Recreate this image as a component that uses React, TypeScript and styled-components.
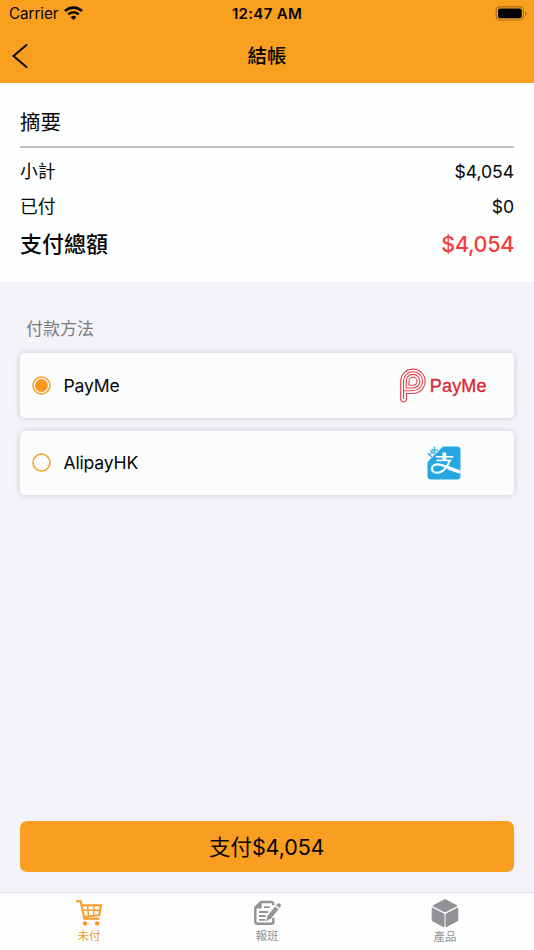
import React from 'react';
import styled, { createGlobalStyle } from 'styled-components';

const GlobalStyle = createGlobalStyle`
  * { box-sizing: border-box; }
  body {
    margin: 0;
    background: #f4f3f9;
    font-family: Inter, "Noto Sans CJK TC", sans-serif;
    color: #050505;
  }
`;

const Screen = styled.div`
  width: 534px;
  height: 950px;
  display: flex;
  flex-direction: column;
  overflow: hidden;
  background: #f4f3f9;
`;

const Header = styled.header`
  height: 83px;
  flex: none;
  background: #faa021;
`;

const StatusBar = styled.div`
  height: 28px;
  display: grid;
  grid-template-columns: 1fr auto 1fr;
  align-items: center;
  padding: 0 7px 0 9px;
  font-size: 15.2px;
  line-height: 28px;
`;

const Carrier = styled.div`
  display: flex;
  align-items: center;
  gap: 6px;
  letter-spacing: -0.05px;

  svg {
    margin-top: -2px;
  }
`;

const Clock = styled.div`
  font-weight: 600;
  font-size: 15px;
  letter-spacing: 0.32px;
  margin-left: -2px;
`;

const Battery = styled.svg`
  justify-self: end;
  margin-top: -2px;
`;

const NavBar = styled.div`
  height: 55px;
  display: grid;
  grid-template-columns: 60px 1fr 60px;
  align-items: center;
  text-align: center;
`;

const BackButton = styled.button`
  border: 0;
  padding: 0 0 0 11px;
  background: none;
  display: flex;
`;

const Title = styled.h1`
  margin: 0;
  font-size: 19.5px;
  line-height: 54px;
  font-weight: 500;
`;

const Summary = styled.section`
  height: 199px;
  flex: none;
  padding: 17px 20px 0;
  background: #fdfefe;
`;

const SummaryTitle = styled.h2`
  margin: 0 0 6px;
  height: 48px;
  font-size: 20.5px;
  line-height: 45px;
  font-weight: 400;
  border-bottom: 2px solid #c2c2c2;
`;

const SummaryRow = styled.div`
  display: flex;
  justify-content: space-between;
  height: 35px;
  line-height: 35px;
  font-size: 17.8px;
`;

const TotalRow = styled(SummaryRow)`
  height: 40px;
  line-height: 40px;
  font-size: 22px;
  font-weight: 500;
`;

const Amount = styled.span<{ $danger?: boolean }>`
  color: ${(p) => (p.$danger ? '#f43b35' : 'inherit')};
  font-size: ${(p) => (p.$danger ? '21.6px' : '17.6px')};
  letter-spacing: ${(p) => (p.$danger ? '-0.35px' : '-0.05px')};
`;

const Methods = styled.section`
  flex: 1;
  padding: 35px 20px 0 19.5px;
`;

const MethodsLabel = styled.h3`
  margin: 0 0 12px 6.5px;
  font-size: 17px;
  line-height: 24px;
  font-weight: 400;
  color: #7c7b80;
`;

const MethodCard = styled.label`
  display: flex;
  align-items: center;
  height: 64.5px;
  margin-bottom: 13px;
  padding-left: 12.5px;
  background: #fbfdfc;
  border-radius: 5px;
  box-shadow: 0 0 6px rgba(60, 60, 90, 0.22);
`;

const RadioMark = styled.svg`
  flex: none;
`;

const MethodName = styled.span`
  flex: 1;
  margin-left: 12.5px;
  font-size: 17.6px;
  line-height: 22px;
  padding-top: 1px;
  letter-spacing: -0.2px;
`;

const LogoSlot = styled.span`
  width: 141px;
  display: flex;
  align-items: center;
  justify-content: center;
`;

const PayMeWord = styled.span`
  margin-left: 3.5px;
  color: #dc2430;
  font-family: "Liberation Sans", sans-serif;
  font-size: 18px;
  line-height: 22px;
  padding-top: 1px;
  letter-spacing: 0.15px;
  -webkit-text-stroke: 0.3px #dc2430;
`;

const PayButton = styled.button`
  height: 51px;
  flex: none;
  margin: 0 20px 20px 19.5px;
  border: 0;
  border-radius: 7px;
  background: #fa9e21;
  color: #050505;
  font: 400 21.5px/51px Inter, "Noto Sans CJK TC", sans-serif;
  padding: 1px 0 0;
  letter-spacing: -0.1px;
`;

const TabBar = styled.nav`
  height: 58px;
  flex: none;
  display: grid;
  grid-template-columns: repeat(3, 1fr);
  background: #fdfdfd;
  border-top: 1px solid #dddde0;
`;

const Tab = styled.a<{ $active?: boolean }>`
  display: flex;
  flex-direction: column;
  align-items: center;
  padding-top: 5px;
  font-size: 11.5px;
  line-height: 16px;
  color: ${(p) => (p.$active ? '#f99a24' : '#929296')};

  svg {
    height: 30px;
    flex: none;
  }
`;

const TabLabel = styled.span<{ $lowered?: boolean }>`
  padding-top: ${(p) => (p.$lowered ? '1px' : '0')};
`;

const Radio = ({ checked = false }: { checked?: boolean }) => (
  <RadioMark width="19" height="19" viewBox="0 0 19 19">
    <circle cx="9.5" cy="9.5" r="8.5" fill="none" stroke="#fa9c22" strokeWidth="1.5" />
    {checked && <circle cx="9.5" cy="9.5" r="6.4" fill="#fa961d" />}
  </RadioMark>
);

const WifiIcon = () => (
  <svg width="19" height="14" viewBox="0 0 19 14" fill="none" stroke="#050505">
    <path d="M1 5.1a12.2 12.2 0 0 1 17 0" strokeWidth="2.8" />
    <path d="M4.2 8.4a7.6 7.6 0 0 1 10.6 0" strokeWidth="2.5" />
    <path d="M9.5 14 6.7 11.2a4 4 0 0 1 5.6 0Z" fill="#050505" stroke="none" />
  </svg>
);

const PayMeIcon = () => (
  <svg width="26" height="35" viewBox="0 0 26 35" fill="none" stroke="#e2404b" strokeWidth="1.1">
    <path d="M.7 13.2A12.2 12.2 0 1 1 13 25.5H6.4v5.6a2.85 2.85 0 0 1-5.7 0Z" />
    <path d="M3.5 31V13.2A9.5 9.5 0 1 1 13 22.7H3.5" />
    <path d="M6.2 20V13.2A6.8 6.8 0 1 1 13 20Z" />
    <path d="M9 17.2v-4A4 4 0 1 1 13 17.2Z" />
  </svg>
);

const AlipayIcon = () => (
  <svg width="34" height="34" viewBox="0 0 34 34" overflow="visible">
    <path d="M16 .5h14a3.5 3.5 0 0 1 3.5 3.5v26a3.5 3.5 0 0 1-3.5 3.5H4A3.5 3.5 0 0 1 .5 30V16Z" fill="#26a7e1" />
    <g fill="none" stroke="#fff">
      <path d="M8.7 10.8h17.6" strokeWidth="1.6" />
      <path d="M17.4 6.5v8" strokeWidth="3.8" />
      <path d="M9.4 14.4h15" strokeWidth="1.6" />
      <path d="M22.8 14.2c-1.8 6-6.7 12.6-12.9 12.6-3.3 0-5-1.9-5-4.1 0-2.6 2.5-4.3 5.6-4.3 6 0 12.5 4.3 23 8" strokeWidth="2.1" />
      <path d="M21 21.6c4 1.6 8 3.1 12.5 4.5" strokeWidth="3.4" />
    </g>
    <text x="6" y="8.5" transform="rotate(-45 6 6)" textAnchor="middle" fontSize="7.8" fontWeight="700" fill="#26a7e1">HK</text>
  </svg>
);

const CartIcon = () => (
  <svg width="28" height="30" viewBox="0 0 28 30" fill="none" stroke="currentColor" strokeWidth="2">
    <path d="M1.2 3.2H5.6L9.4 20.8H24.5" />
    <path d="M6.4 7.2H25.9L24.3 17.2 9 19" />
    <path d="M12.6 7.4 13.4 18.4M19 7.4 18.6 17.8M7.5 12.2H25" strokeWidth="1.4" />
    <circle cx="10" cy="25.4" r="2.2" fill="currentColor" stroke="none" />
    <circle cx="22.2" cy="25.4" r="2.2" fill="currentColor" stroke="none" />
  </svg>
);

const ReportIcon = () => (
  <svg width="28" height="30" viewBox="0 -1 28 30" fill="none" stroke="currentColor">
    <path d="M20.3 6.2V5a2 2 0 0 0-2-2H8L2.3 8.5v14.2a2 2 0 0 0 2 2h14a2 2 0 0 0 2-2V19" strokeWidth="2.4" />
    <path d="M1.4 9.6h7.2V2Z" fill="currentColor" stroke="none" />
    <path d="M11 8.2h5.8M6 13h9.4M6 17h6.8M6 20.8h6.3" strokeWidth="1.8" />
    <path d="M13 22.6l1.5-5.6 7.6-9.5 3.4 2.7-7.6 9.5ZM23 6.3l.9-1.1a2.15 2.15 0 0 1 3.4 2.7l-.9 1.1Z" fill="currentColor" stroke="none" />
    <path d="M15.1 20.6l1 .8" stroke="#fdfdfd" strokeWidth="1.2" />
  </svg>
);

const BoxIcon = () => (
  <svg width="28" height="30" viewBox="0 0 28 30" fill="currentColor" stroke="currentColor" strokeLinejoin="round" strokeWidth="1">
    <path d="M14 1.5 26 7.8 14 14 2 7.8Z" />
    <path d="M1.2 10 13 16.1V28.9L1.2 22.6ZM26.8 10 15 16.1V28.9l11.8-6.3Z" />
  </svg>
);

export default function App() {
  return (
    <>
      <GlobalStyle />
      <Screen>
        <Header>
          <StatusBar>
            <Carrier>
              Carrier
              <WifiIcon />
            </Carrier>
            <Clock>12:47 AM</Clock>
            <Battery width="32" height="15" viewBox="0 0 32 15">
              <rect x="1.2" y=".8" width="27.4" height="13.2" rx="3.8" fill="none" stroke="#a96e1f" strokeWidth="1.2" />
              <rect x="3" y="2.5" width="23.8" height="9.8" rx="2" fill="#050505" />
              <path d="M30.2 5.2c2 .8 2 3.6 0 4.4Z" fill="#a96e1f" />
            </Battery>
          </StatusBar>
          <NavBar>
            <BackButton aria-label="返回">
              <svg width="18" height="26" viewBox="0 0 18 26" fill="none" stroke="#050505" strokeWidth="1.9">
                <path d="M16 1.5 2.5 13 16 24.5" />
              </svg>
            </BackButton>
            <Title>結帳</Title>
          </NavBar>
        </Header>
        <Summary>
          <SummaryTitle>摘要</SummaryTitle>
          <SummaryRow>
            <span>小計</span>
            <Amount>$4,054</Amount>
          </SummaryRow>
          <SummaryRow>
            <span>已付</span>
            <Amount>$0</Amount>
          </SummaryRow>
          <TotalRow>
            <span>支付總額</span>
            <Amount $danger>$4,054</Amount>
          </TotalRow>
        </Summary>
        <Methods>
          <MethodsLabel>付款方法</MethodsLabel>
          <MethodCard>
            <Radio checked />
            <MethodName>PayMe</MethodName>
            <LogoSlot>
              <PayMeIcon />
              <PayMeWord>PayMe</PayMeWord>
            </LogoSlot>
          </MethodCard>
          <MethodCard>
            <Radio />
            <MethodName>AlipayHK</MethodName>
            <LogoSlot>
              <AlipayIcon />
            </LogoSlot>
          </MethodCard>
        </Methods>
        <PayButton>支付$4,054</PayButton>
        <TabBar>
          <Tab $active>
            <CartIcon />
            <TabLabel>未付</TabLabel>
          </Tab>
          <Tab>
            <ReportIcon />
            <TabLabel>報班</TabLabel>
          </Tab>
          <Tab>
            <BoxIcon />
            <TabLabel $lowered>產品</TabLabel>
          </Tab>
        </TabBar>
      </Screen>
    </>
  );
}
